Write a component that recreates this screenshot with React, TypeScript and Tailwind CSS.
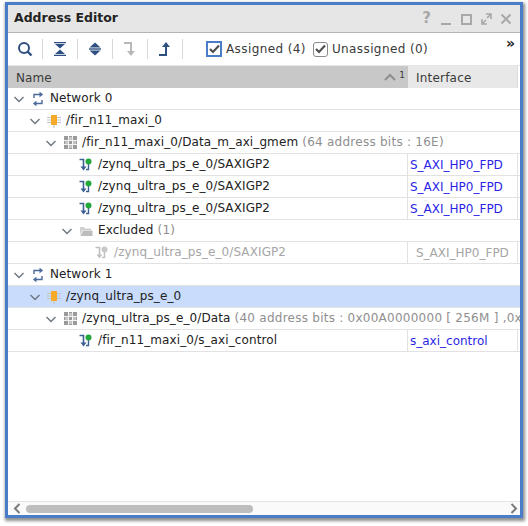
type RowData = {
  label: string;
  note?: string;
  iface?: string;
  level: "l0" | "l1" | "l2" | "l3" | "l4";
  icon: "net" | "chip" | "grid" | "seg" | "segOff" | "folder";
  open?: boolean;
  selected?: boolean;
  muted?: boolean;
};

const ROWS: RowData[] = [
  { label: "Network 0", level: "l0", icon: "net", open: true },
  { label: "/fir_n11_maxi_0", level: "l1", icon: "chip", open: true },
  { label: "/fir_n11_maxi_0/Data_m_axi_gmem", note: " (64 address bits : 16E)", level: "l2", icon: "grid", open: true },
  { label: "/zynq_ultra_ps_e_0/SAXIGP2", iface: "S_AXI_HP0_FPD", level: "l3", icon: "seg" },
  { label: "/zynq_ultra_ps_e_0/SAXIGP2", iface: "S_AXI_HP0_FPD", level: "l3", icon: "seg" },
  { label: "/zynq_ultra_ps_e_0/SAXIGP2", iface: "S_AXI_HP0_FPD", level: "l3", icon: "seg" },
  { label: "Excluded", note: " (1)", level: "l3", icon: "folder", open: true },
  { label: "/zynq_ultra_ps_e_0/SAXIGP2", iface: "S_AXI_HP0_FPD", level: "l4", icon: "segOff", muted: true },
  { label: "Network 1", level: "l0", icon: "net", open: true },
  { label: "/zynq_ultra_ps_e_0", level: "l1", icon: "chip", open: true, selected: true },
  { label: "/zynq_ultra_ps_e_0/Data", note: " (40 address bits : 0x00A0000000 [ 256M ] ,0x0400000000 [ 4G ])", level: "l2", icon: "grid", open: true },
  { label: "/fir_n11_maxi_0/s_axi_control", iface: "s_axi_control", level: "l3", icon: "seg" },
];

const LEVEL_PAD = {
  l0: "pl-[5px]",
  l1: "pl-[21px]",
  l2: "pl-[37px]",
  l3: "pl-[53px]",
  l4: "pl-[69px]",
};

function Chevron() {
  return (
    <svg width="12" height="12" viewBox="0 0 12 12" className="shrink-0">
      <path d="M1.5 4 L6 8.5 L10.5 4" fill="none" stroke="#6f7680" strokeWidth="1.4" />
    </svg>
  );
}

function RowIcon({ kind }: { kind: RowData["icon"] }) {
  if (kind === "net") {
    return (
      <svg width="14" height="14" viewBox="0 0 14 14">
        <path d="M3 6 V2.5 H11 M8.5 0.5 L11 2.5 L8.5 4.5" fill="none" stroke="#4a6a9c" strokeWidth="1.4" />
        <path d="M11 8 V11.5 H3 M5.5 9.5 L3 11.5 L5.5 13.5" fill="none" stroke="#4a6a9c" strokeWidth="1.4" />
      </svg>
    );
  }
  if (kind === "chip") {
    return (
      <svg width="14" height="14" viewBox="0 0 14 14">
        <path d="M0 3.5 H4 M0 6 H4 M0 8.5 H4 M10 3.5 H14 M10 6 H14 M10 8.5 H14 M7 11 V14" stroke="#c4c4c4" strokeWidth="1.2" fill="none" />
        <rect x="4" y="1" width="6" height="10" fill="#f7a928" />
      </svg>
    );
  }
  if (kind === "grid") {
    return (
      <svg width="13" height="13" viewBox="0 0 13 13">
        <rect x="0" y="0" width="13" height="13" fill="#9a9a9a" />
        <path d="M4.5 0 V13 M8.5 0 V13 M0 4.5 H13 M0 8.5 H13" stroke="#f2f2f2" strokeWidth="1" />
        <rect x="5" y="1" width="3" height="3" fill="#c4c4c4" />
        <rect x="1" y="5" width="3" height="3" fill="#c4c4c4" />
        <rect x="9" y="5" width="3" height="3" fill="#c4c4c4" />
        <rect x="5" y="9" width="3" height="3" fill="#c4c4c4" />
      </svg>
    );
  }
  if (kind === "folder") {
    return (
      <svg width="14" height="12" viewBox="0 0 14 12">
        <path d="M1 2 H5 L6 3.5 H12 V5 H3.5 L1 10 Z" fill="#d0d0d0" />
        <path d="M1.5 11 L4 5.5 H13.5 V11 Z" fill="#bdbdbd" />
      </svg>
    );
  }
  const off = kind === "segOff";
  const line = off ? "#c0c0c0" : "#3d5f94";
  return (
    <svg width="14" height="14" viewBox="0 0 14 14">
      <path d="M0.5 1.5 H4.5 V10" fill="none" stroke={line} strokeWidth="1.6" />
      <path d="M1.5 8.5 L4.5 12.5 L7.5 8.5 Z" fill={line} />
      <path d="M9.5 5 V11.5 H7" fill="none" stroke={line} strokeWidth="1.4" />
      <circle cx="9.5" cy="3.5" r="3" fill={off ? "#c8c8c8" : "#22a83a"} />
    </svg>
  );
}

function TreeRow({ row }: { row: RowData }) {
  const showChevron = row.open;
  return (
    <div className={`flex h-[22px] shrink-0 border-b border-[#e2e2e2] ${row.selected ? "bg-[#c9dcfb]" : "bg-white"}`}>
      <div
        className={`flex min-w-0 items-center ${LEVEL_PAD[row.level]} ${
          row.iface ? "w-[400px] border-r border-[#e2e2e2]" : "flex-1"
        }`}
      >
        {showChevron ? <Chevron /> : <span className="w-[12px] shrink-0" />}
        <span className="flex w-[24px] shrink-0 items-center justify-center pl-[2px]">
          <RowIcon kind={row.icon} />
        </span>
        <span
          className={`ml-[1px] whitespace-nowrap pb-[2px] tracking-[0.1px] ${
            row.muted ? "text-[#a6a6a6]" : "text-[#222222]"
          }`}
        >
          {row.label}
          {row.note && <span className="tracking-[0.25px] text-[#8f8f8f]">{row.note}</span>}
        </span>
      </div>
      {row.iface && (
        <div
          className={`flex w-[110px] items-center border-r border-[#e2e2e2] ${
            row.muted ? "pl-[8px] text-[#a6a6a6]" : "pl-[2px] text-[#2a1fe6]"
          }`}
        >
          {row.iface}
        </div>
      )}
    </div>
  );
}

function ToolButton({ children }: { children: React.ReactNode }) {
  return (
    <div className="flex h-[20px] w-[35px] items-center justify-center border-r border-[#d8d8d8]">
      {children}
    </div>
  );
}

function CheckFilter({ label, blue }: { label: string; blue?: boolean }) {
  return (
    <div className="flex items-center">
      <span
        className={`flex items-center justify-center ${
          blue
            ? "h-[16px] w-[16px] border-2 border-[#4a7cc8] bg-white"
            : "h-[15px] w-[15px] rounded-[3px] border border-[#8a8a8a] bg-white"
        }`}
      >
        <svg width="11" height="10" viewBox="0 0 11 10">
          <path d="M1 5 L4 8 L10 1.5" fill="none" stroke="#505050" strokeWidth="2.2" />
        </svg>
      </span>
      <span className="ml-[4px] tracking-[0.4px] text-[#3a3a3a]">{label}</span>
    </div>
  );
}

export default function App() {
  return (
    <div className="h-[526px] w-[528px] overflow-hidden bg-white pl-[5px] pt-[2px] font-['DejaVu_Sans',sans-serif] text-[12px]">
      <div className="flex h-[516px] w-[518px] flex-col border-[3px] border-[#4a7cc8] bg-white shadow-[1px_2px_3px_1px_#8f8f8f]">
        {/* title bar */}
        <div className="flex h-[28px] shrink-0 items-center border-b border-[#b4b4b4] bg-[#e6e6e6] pl-[6px]">
          <span className="text-[12.5px] font-bold text-[#222222]">Address Editor</span>
          <div className="ml-auto flex items-center pr-[9px]">
            <span className="mr-[10px] text-[15px] font-bold leading-none text-[#a8a8a8]">?</span>
            <svg width="70" height="14" viewBox="0 0 70 14">
              <path d="M0 12 H10" stroke="#a8a8a8" strokeWidth="2" />
              <rect x="21" y="3" width="9" height="9" fill="none" stroke="#a8a8a8" strokeWidth="2" />
              <path d="M41 7 V12 H46 M42 11 L45 8 M45 2 H50 V7 M49 3 L46 6" fill="none" stroke="#a8a8a8" strokeWidth="1.6" />
              <path d="M60.5 2.5 L69.5 11.5 M69.5 2.5 L60.5 11.5" stroke="#a8a8a8" strokeWidth="2" />
            </svg>
          </div>
        </div>

        {/* toolbar */}
        <div className="flex h-[33px] shrink-0 items-center border-b border-[#e6e6e6] bg-white">
          <ToolButton>
            <svg width="16" height="16" viewBox="0 0 16 16">
              <circle cx="7" cy="7" r="5" fill="none" stroke="#2f5080" strokeWidth="2" />
              <path d="M10.5 10.5 L14.5 14.5" stroke="#2f5080" strokeWidth="2.4" />
            </svg>
          </ToolButton>
          <ToolButton>
            <svg width="14" height="14" viewBox="0 0 14 14">
              <path d="M1 0.5 H13 M1 13.5 H13" stroke="#2f5080" strokeWidth="1.6" />
              <path d="M2 2 H12 L7 6.5 Z M2 12 H12 L7 7.5 Z" fill="#2f5080" />
            </svg>
          </ToolButton>
          <ToolButton>
            <svg width="14" height="14" viewBox="0 0 14 14">
              <path d="M7 0.5 L12.5 5.5 H1.5 Z M7 13.5 L12.5 8.5 H1.5 Z" fill="#2f5080" />
              <path d="M1 7 H13" stroke="#2f5080" strokeWidth="1.4" />
            </svg>
          </ToolButton>
          <ToolButton>
            <svg width="14" height="16" viewBox="0 0 14 16">
              <path d="M1 2 H8 V11" fill="none" stroke="#b8b8b8" strokeWidth="2" />
              <path d="M4 10 H12 L8 15 Z" fill="#b8b8b8" />
            </svg>
          </ToolButton>
          <ToolButton>
            <svg width="14" height="16" viewBox="0 0 14 16">
              <path d="M1 14 H8 V5" fill="none" stroke="#2f5080" strokeWidth="2" />
              <path d="M4 6 H12 L8 1 Z" fill="#2f5080" />
            </svg>
          </ToolButton>
          <div className="ml-[23px] flex items-center gap-[7px]">
            <CheckFilter blue label="Assigned (4)" />
            <CheckFilter label="Unassigned (0)" />
          </div>
          <span className="mb-[12px] ml-auto mr-[5px] text-[14px] font-bold leading-none text-[#222222]">»</span>
        </div>

        {/* header */}
        <div className="flex h-[22px] shrink-0 text-[#3a3a3a]">
          <div className="flex w-[400px] items-center bg-[#c8c8c8] pl-[8px]">
            <span className="pt-[1px] tracking-[0.1px]">Name</span>
            <svg width="12" height="8" viewBox="0 0 12 8" className="ml-auto">
              <path d="M1 7 L6 2 L11 7" fill="none" stroke="#8e8e8e" strokeWidth="2" />
            </svg>
            <span className="mb-[3px] ml-[3px] mr-[3px] text-[9px] leading-none">1</span>
          </div>
          <div className="flex w-[110px] items-center border-r border-[#dcdcdc] bg-[#e8e8e8] pl-[8px]">
            <span className="pt-[1px] tracking-[0.2px]">Interface</span>
          </div>
        </div>

        {/* tree */}
        <div className="flex min-h-0 flex-1 flex-col overflow-hidden bg-white">
          {ROWS.map((row, i) => (
            <TreeRow key={i} row={row} />
          ))}
        </div>

        {/* horizontal scrollbar */}
        <div className="flex h-[14px] shrink-0 items-center border-t border-[#e4e4e4] bg-[#fafafa] pl-[5px] pr-[2px]">
          <svg width="8" height="11" viewBox="0 0 8 11">
            <path d="M6.5 1 L2 5.5 L6.5 10" fill="none" stroke="#7a7a7a" strokeWidth="2" />
          </svg>
          <div className="ml-[5px] h-[8px] w-[227px] rounded-full bg-[#bdbdbd]" />
          <svg width="8" height="11" viewBox="0 0 8 11" className="ml-auto">
            <path d="M1.5 1 L6 5.5 L1.5 10" fill="none" stroke="#7a7a7a" strokeWidth="2" />
          </svg>
        </div>
      </div>
    </div>
  );
}
